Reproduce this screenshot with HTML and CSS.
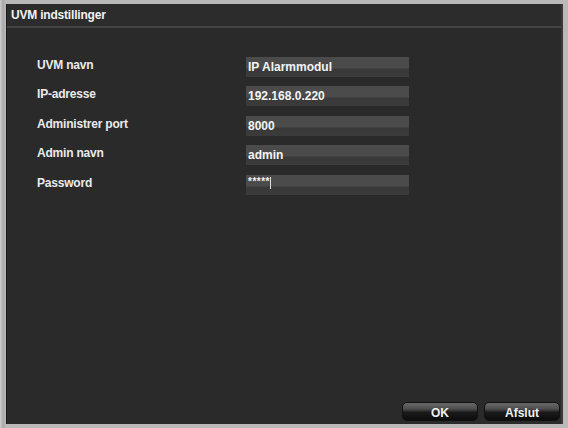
FILE: index.html
```html
<!DOCTYPE html>
<html>
<head>
<meta charset="utf-8">
<link rel="stylesheet" href="styles.css">
</head>
<body>
<div class="screen">
  <div class="dialog">
    <div class="titlebar">UVM indstillinger</div>
    <div class="form">
      <div class="row"><div class="label">UVM navn</div><div class="field">IP Alarmmodul</div></div>
      <div class="row"><div class="label">IP-adresse</div><div class="field">192.168.0.220</div></div>
      <div class="row"><div class="label">Administrer port</div><div class="field">8000</div></div>
      <div class="row"><div class="label">Admin navn</div><div class="field">admin</div></div>
      <div class="row"><div class="label">Password</div><div class="field pw">*****<span class="caret"></span></div></div>
    </div>
    <div class="buttons">
      <div class="btn">OK</div>
      <div class="btn">Afslut</div>
    </div>
  </div>
</div>
</body>
</html>
```
FILE: styles.css
```css
html, body {
  margin: 0;
  padding: 0;
  width: 568px;
  height: 428px;
  overflow: hidden;
  background: #c4c4c4;
  font-family: "Liberation Sans", Arial, sans-serif;
}
.screen {
  width: 568px;
  height: 428px;
  box-sizing: border-box;
  padding: 4px 5px 4px 6px;
  background: linear-gradient(to right, #cfcfcf, #a9a9a9 3px, #b9b9b9 6px);
}
.dialog {
  height: 100%;
  background: #2a2a2a;
  display: flex;
  flex-direction: column;
  border-left: 1px solid #1c1c1c;
  border-right: 2px solid #3a3a3a;
  box-sizing: border-box;
}
.titlebar {
  height: 22px;
  line-height: 22px;
  padding-left: 4px;
  color: #f2f2f2;
  font-size: 12px;
  font-weight: bold;
  letter-spacing: -0.2px;
  border-bottom: 2px solid #444;
  background: #2c2c2c;
}
.form {
  padding: 29px 0 0 30px;
  display: flex;
  flex-direction: column;
  gap: 9.4px;
}
.row {
  display: flex;
  align-items: center;
  height: 20px;
}
.label {
  width: 209px;
  color: #eaeaea;
  font-size: 12px;
  font-weight: bold;
  letter-spacing: -0.2px;
  padding-bottom: 4px;
}
.field {
  width: 163px;
  height: 20px;
  line-height: 20px;
  padding-left: 2px;
  color: #f4f4f4;
  font-size: 12px;
  font-weight: bold;
  background: linear-gradient(to bottom, #4b4b4b 0, #4b4b4b 55%, #393939 60%, #3b3b3b 100%);
  box-sizing: border-box;
  white-space: nowrap;
}
.pw {
  font-size: 10px;
  letter-spacing: 0.5px;
  display: flex;
  align-items: flex-start;
  line-height: 14px;
}
.caret {
  display: inline-block;
  width: 1px;
  height: 12px;
  margin-top: 2px;
  background: #ddd;
}
.buttons {
  margin-top: auto;
  display: flex;
  justify-content: flex-end;
  gap: 6px;
  padding: 0 1px 3px 0;
}
.btn {
  width: 76px;
  height: 19px;
  line-height: 20px;
  text-align: center;
  color: #f0f0f0;
  font-size: 12px;
  font-weight: bold;
  border-radius: 5px;
  background: linear-gradient(to bottom, #6a6a6a 0, #4d4d4d 35%, #1a1a1a 55%, #0c0c0c 100%);
  border: 1px solid #111;
  box-sizing: border-box;
}
```
